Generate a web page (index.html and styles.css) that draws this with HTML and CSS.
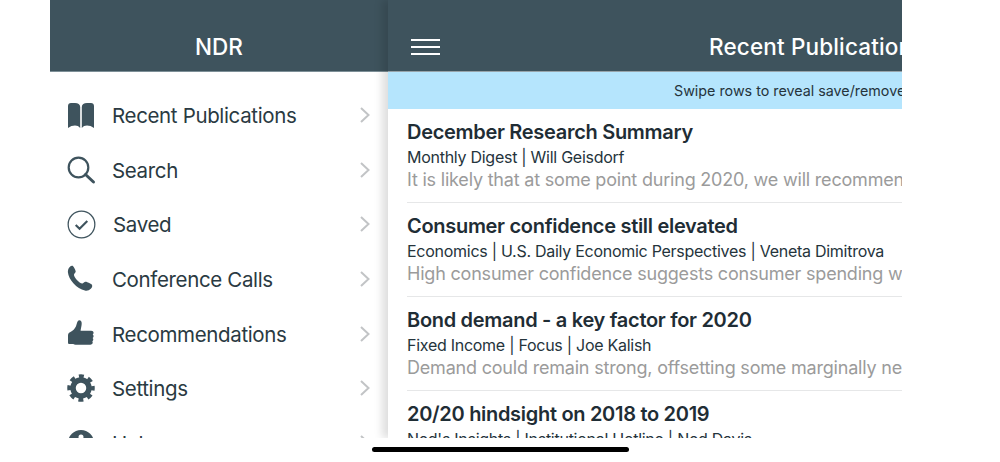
FILE: index.html
```html
<!DOCTYPE html>
<html lang="en">
<head>
<meta charset="utf-8">
<title>NDR</title>
<link rel="stylesheet" href="styles.css">
</head>
<body>
<div class="screen">
  <aside class="drawer">
    <header class="drawer-head"><h1 class="drawer-title">NDR</h1></header>
    <nav class="menu">
      <a class="row"><svg class="icon" viewBox="0 0 28 28"><path d="M1 5C1 3 2.200 2 4 2h4c3 0 5.200 1.300 5.200 4v21c-1.300-1.700-3-2.500-5.200-2.500-2.300 0-4.800.8-7 2.500zM27 5C27 3 25.800 2 24 2h-4c-3 0-5.200 1.300-5.200 4v21c1.300-1.700 3-2.500 5.200-2.500 2.300 0 4.800.8 7 2.500z"/></svg><span class="label">Recent Publications</span><svg class="chev" viewBox="0 0 10 16"><path d="M1 1l7.500 7L1 15"/></svg></a>
      <a class="row"><svg class="icon" viewBox="0 0 28 28"><circle class="line" cx="11.500" cy="11.500" r="9.800"/><path class="line thick" d="M18.500 18.500l8 7.500"/></svg><span class="label">Search</span><svg class="chev" viewBox="0 0 10 16"><path d="M1 1l7.500 7L1 15"/></svg></a>
      <a class="row"><svg class="icon check" viewBox="0 0 30 30"><circle class="line thin" cx="15" cy="15" r="13.800"/><path class="line" d="M9 15.500l4 4 8-8"/></svg><span class="label label-saved">Saved</span><svg class="chev" viewBox="0 0 10 16"><path d="M1 1l7.500 7L1 15"/></svg></a>
      <a class="row"><svg class="icon" viewBox="0 0 28 28"><path d="M2.500 2.200C3.800.9 5.300.5 6.100 1.200c.9.800 2.500 4 2.600 5.200.1 1.100-1.500 2-1.700 3-.2 1.400 1.200 3.700 2.900 5.500 1.800 1.900 4.100 3.700 5.600 3.500 1.100-.1 1.900-1.700 3.100-1.600 1.300.1 5.100 1.800 6.100 2.700 1 1 .6 2.800-.9 4.300-1.600 1.600-3.800 2.200-5.900 1.700-4-.9-8.200-3.800-11.300-7.100C3.400 15.100 1.200 10.900.9 7.200.8 5.400 1.300 3.500 2.500 2.200z"/></svg><span class="label">Conference Calls</span><svg class="chev" viewBox="0 0 10 16"><path d="M1 1l7.500 7L1 15"/></svg></a>
      <a class="row"><svg class="icon" viewBox="0 0 28 28"><path d="M1 15.500c0-1.500.6-2.500 2-3.200 3-1.500 4.800-3.500 6-6C10 3.800 10.300.3 12.300.3c1.700 0 2.500 1.600 2.400 3.400-.1 2.300-.9 4.700-1.100 7h10.600c1.400 0 2.400.8 2.400 2 0 .8-.4 1.400-.9 1.700.6.500.9 1.100.9 1.800 0 .8-.4 1.400-1 1.700.5.500.7 1 .7 1.700 0 .8-.4 1.400-1 1.700.3.400.4.800.4 1.300 0 1.300-1 2.200-2.500 2.200H10c-2.200 0-3.200-.8-5-.8H2.600c-1 0-1.600-.6-1.600-1.600z"/></svg><span class="label">Recommendations</span><svg class="chev" viewBox="0 0 10 16"><path d="M1 1l7.500 7L1 15"/></svg></a>
      <a class="row"><svg class="icon" viewBox="0 0 28 28"><circle class="gear-ring" cx="14" cy="14" r="8"/><circle class="gear-teeth" cx="14" cy="14" r="11.500"/></svg><span class="label">Settings</span><svg class="chev" viewBox="0 0 10 16"><path d="M1 1l7.500 7L1 15"/></svg></a>
      <a class="row"><svg class="icon" viewBox="0 0 28 28"><path fill-rule="evenodd" d="M14 1a13 13 0 1 0 0 26 13 13 0 0 0 0-26zM14 5.500a2.500 2.500 0 1 1 0 5 2.500 2.500 0 0 1 0-5z"/></svg><span class="label">Help</span><svg class="chev" viewBox="0 0 10 16"><path d="M1 1l7.500 7L1 15"/></svg></a>
    </nav>
  </aside>
  <main class="main">
    <header class="main-head">
      <span class="burger"><i></i><i></i><i></i></span>
      <h2 class="main-title">Recent Publications</h2>
    </header>
    <div class="banner">Swipe rows to reveal save/remove</div>
    <section class="list">
      <article class="item">
        <h3 class="item-title">December Research Summary</h3>
        <p class="item-meta">Monthly Digest | Will Geisdorf</p>
        <p class="item-text">It is likely that at some point during 2020, we will recommend</p>
      </article>
      <article class="item">
        <h3 class="item-title">Consumer confidence still elevated</h3>
        <p class="item-meta">Economics | U.S. Daily Economic Perspectives | Veneta Dimitrova</p>
        <p class="item-text">High consumer confidence suggests consumer spending will</p>
      </article>
      <article class="item">
        <h3 class="item-title">Bond demand - a key factor for 2020</h3>
        <p class="item-meta">Fixed Income | Focus | Joe Kalish</p>
        <p class="item-text">Demand could remain strong, offsetting some marginally negative</p>
      </article>
      <article class="item">
        <h3 class="item-title">20/20 hindsight on 2018 to 2019</h3>
        <p class="item-meta">Ned's Insights | Institutional Hotline | Ned Davis</p>
        <p class="item-text">Looking back at the calls we made</p>
      </article>
    </section>
  </main>
</div>
<div class="home-bar"><span class="home-pill"></span></div>
</body>
</html>
```
FILE: styles.css
```css
* { box-sizing: border-box; margin: 0; padding: 0; }
html, body { width: 1000px; height: 462px; overflow: hidden; background: #fff; }
body { font-family: Inter, "Liberation Sans", sans-serif; color: #25343c; }

.screen { display: flex; width: 852px; height: 438px; margin-left: 50px; overflow: hidden; }

.drawer { flex: 0 0 338px; display: flex; flex-direction: column; }
.drawer-head {
  height: 72px; flex: none; background: #3e535d; border-bottom: 1px solid #7d8f97;
  display: flex; justify-content: center; padding-top: 33px;
}
.drawer-title { font-size: 22.500px; font-weight: 500; line-height: 27px; color: #fff; }

.menu { padding-top: 16px; }
.row { display: flex; align-items: center; height: 54.6px; padding-left: 17px; padding-right: 18px; }
.icon { width: 28px; height: 28px; flex: none; fill: #3e535d; overflow: visible; }
.check { width: 29px; height: 29px; }
.line { fill: none; stroke: #3e535d; stroke-width: 2.200; }
.thick { stroke-width: 3; stroke-linecap: round; }
.thin { stroke-width: 1.300; }
.gear-ring { fill: none; stroke: #3e535d; stroke-width: 5.500; }
.gear-teeth { fill: none; stroke: #3e535d; stroke-width: 4.500; stroke-dasharray: 4.800 4.232; stroke-dashoffset: 2.400; }
.label { flex: 1; margin-left: 17px; padding-top: 2px; font-size: 20.500px; letter-spacing: -.35px; line-height: 28px; color: #2a3a42; }
.label-saved { margin-left: 17px; }
.chev { width: 10px; height: 16px; flex: none; fill: none; stroke: #c2c4c6; stroke-width: 2; }

.main {
  flex: 0 0 514px; display: flex; flex-direction: column; overflow: hidden;
  background: #fff; box-shadow: -6px 0 8px rgba(0, 0, 0, .13); position: relative;
}
.main-head {
  height: 72px; flex: none; background: #3e535d; border-bottom: 1px solid #98a4aa;
  display: flex; padding: 33px 0 0 23px;
}
.burger { width: 29px; height: 16px; margin-top: 6px; flex: none; display: flex; flex-direction: column; justify-content: space-between; }
.burger i { display: block; height: 2px; background: #fff; }
.main-title { margin-left: 269px; font-size: 22.500px; font-weight: 500; letter-spacing: .15px; line-height: 27px; color: #fff; white-space: nowrap; }

.banner {
  height: 37px; flex: none; margin-top: 0; background: #b5e5fd; color: #25343c;
  font-size: 14.300px; line-height: 37px; padding-left: 286px; white-space: nowrap;
}
.list { padding-left: 19px; }
.item { height: 94px; padding-top: 10px; border-bottom: 1px solid #e6e7e8; white-space: nowrap; }
.item-title { font-size: 20px; font-weight: 600; letter-spacing: -.3px; line-height: 26px; color: #1f2d35; }
.item-meta { font-size: 16px; letter-spacing: -.27px; line-height: 22px; margin-top: 1px; color: #25343c; }
.item-text { font-size: 18px; letter-spacing: -.2px; line-height: 24px; color: #9b9b9b; }

.home-bar { display: flex; justify-content: center; padding-top: 9px; }
.home-pill { width: 257px; height: 5px; border-radius: 3px; background: #000; }
```
